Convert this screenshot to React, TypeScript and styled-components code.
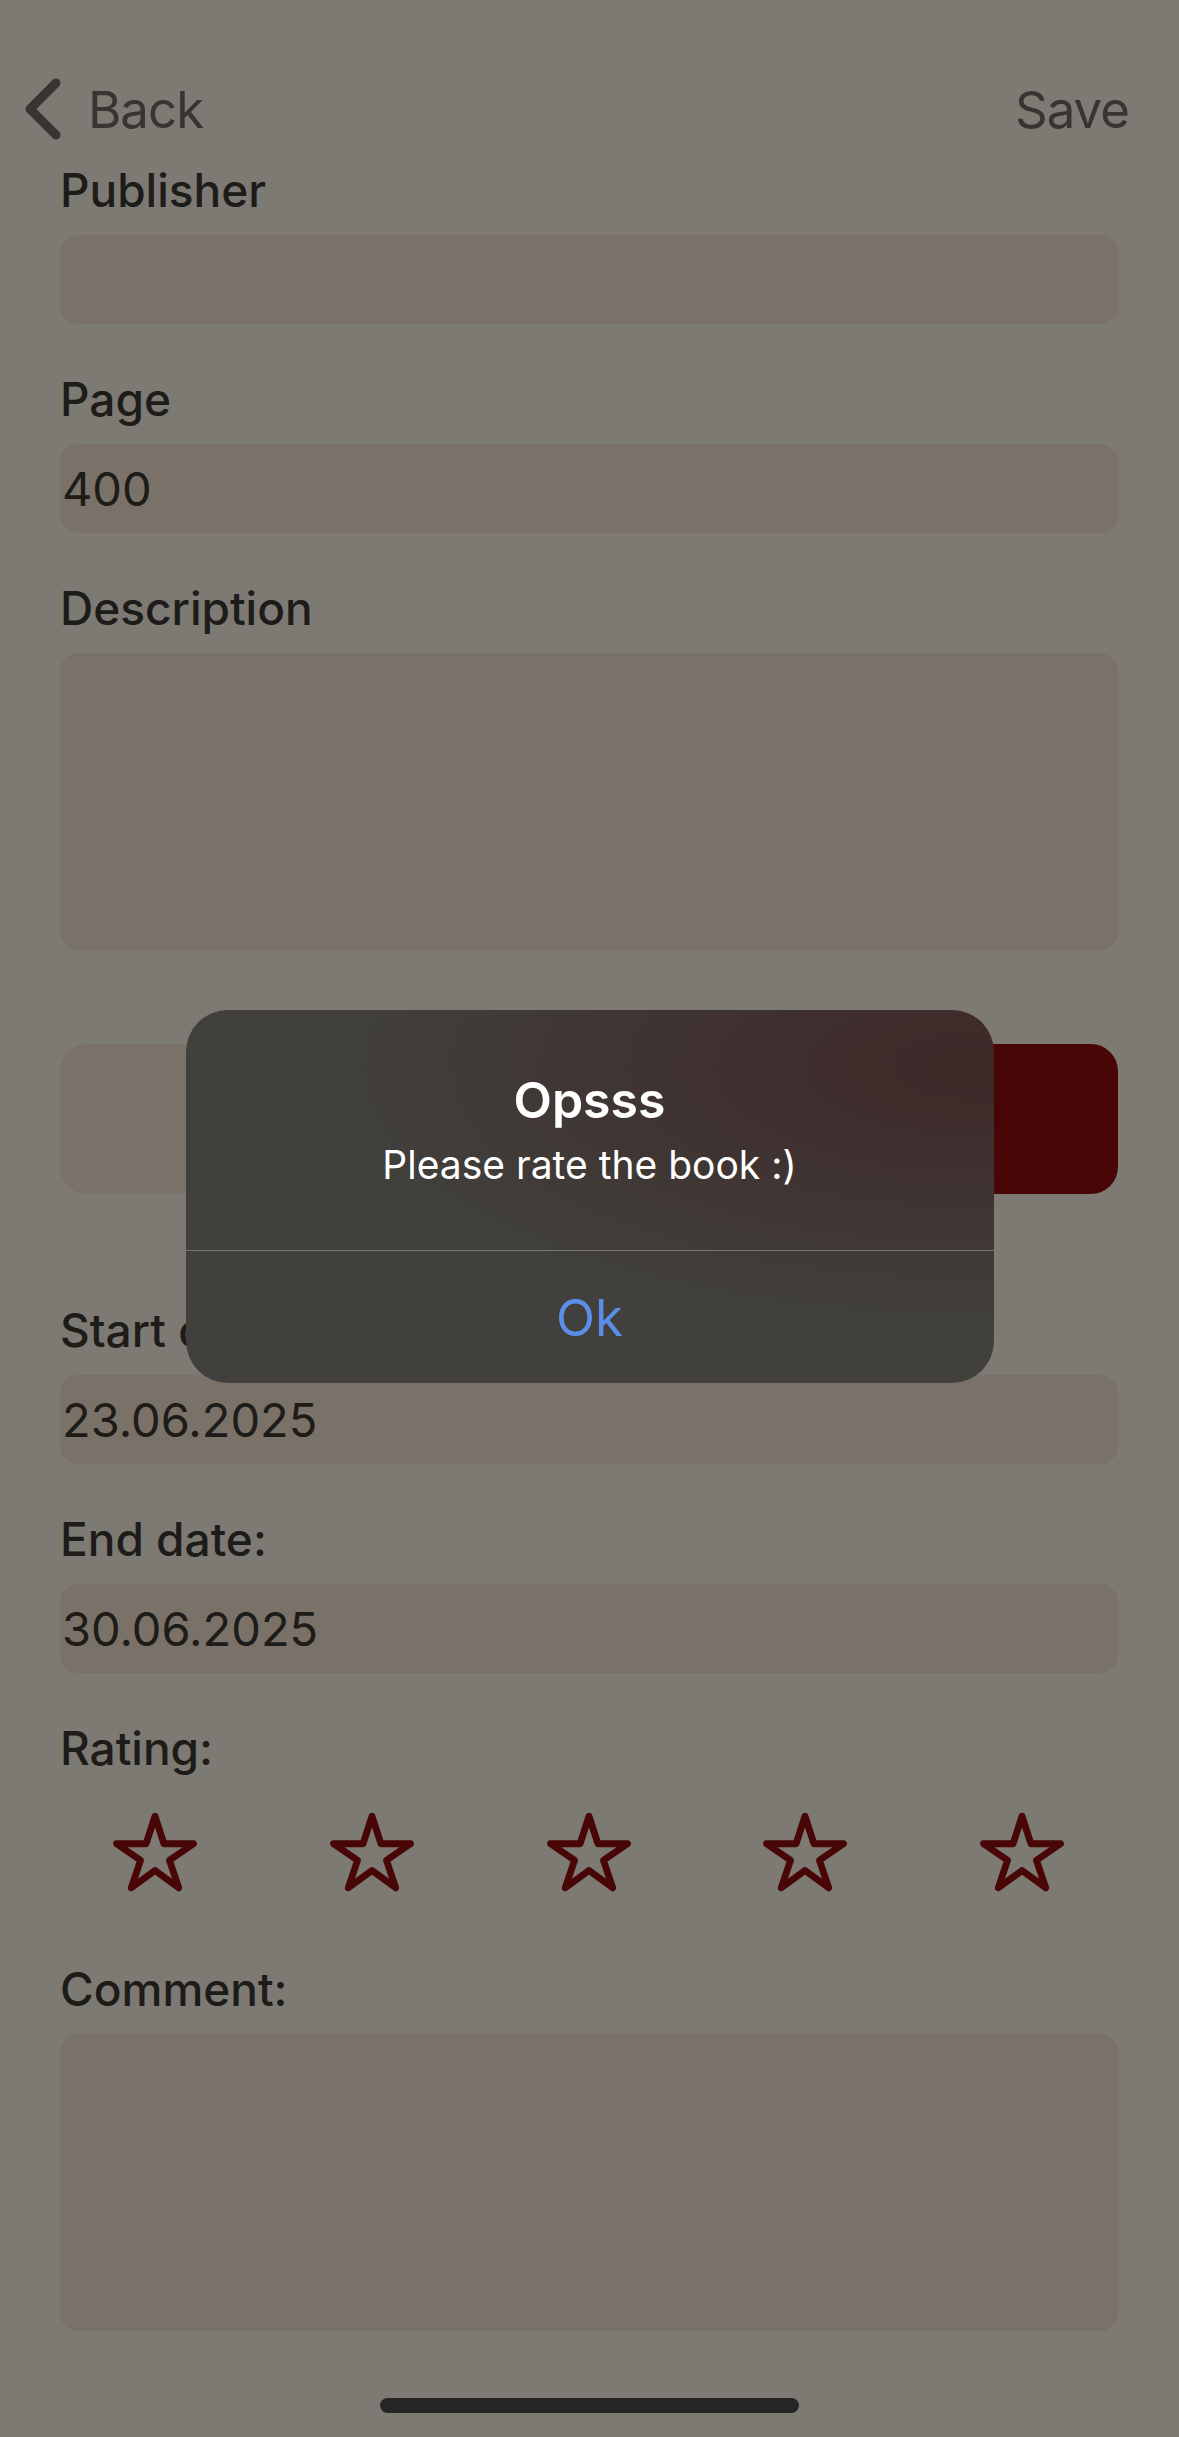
import React from 'react';
import styled, { createGlobalStyle } from 'styled-components';

const GlobalStyle = createGlobalStyle`
  html, body {
    margin: 0;
    padding: 0;
    background: #7d7973;
  }
  * {
    box-sizing: border-box;
  }
  body {
    font-family: 'Inter', 'Liberation Sans', sans-serif;
  }
`;

const Screen = styled.div`
  position: relative;
  width: 1179px;
  height: 2437px;
  overflow: hidden;
  background: #d0cac0;
`;

const NavBar = styled.header`
  display: flex;
  align-items: center;
  justify-content: space-between;
  height: 62px;
  margin-top: 78px;
  padding: 0 50px 0 22px;
`;

const NavButton = styled.button`
  display: flex;
  align-items: center;
  gap: 24px;
  border: none;
  background: none;
  padding: 0;
  font-family: inherit;
  font-size: 51px;
  letter-spacing: -1px;
  font-weight: 400;
  color: #5d5853;
  cursor: pointer;
`;

const Form = styled.main`
  display: flex;
  flex-direction: column;
  padding: 23px 61px 0 60px;
`;

const Field = styled.div<{ $gap?: number }>`
  display: flex;
  flex-direction: column;
  margin-bottom: ${(p) => p.$gap ?? 48}px;
`;

const Label = styled.label`
  font-size: 46px;
  line-height: 54px;
  font-weight: 500;
  color: #322f2b;
  margin-bottom: 18px;
`;

const Input = styled.div<{ $tall?: boolean }>`
  display: flex;
  align-items: ${(p) => (p.$tall ? 'flex-start' : 'center')};
  height: ${(p) => (p.$tall ? 297 : 89)}px;
  border-radius: 18px;
  background: #cbbeaf;
  padding-left: 2px;
  font-size: 47px;
  color: #322f2b;
`;

const ButtonRow = styled.div`
  display: flex;
  gap: 20px;
  margin: 94px 0 109px;
`;

const ActionButton = styled.button<{ $primary?: boolean }>`
  flex: 1;
  height: 150px;
  border: none;
  border-radius: 27px;
  background: ${(p) => (p.$primary ? '#7b0a0a' : '#cbbeaf')};
`;

const StarRow = styled.div`
  display: flex;
  justify-content: space-between;
  padding: 0 52px 0 51px;
  margin: 15px 0 66px;
`;

const StarButton = styled.button`
  display: flex;
  width: 88px;
  height: 88px;
  padding: 0;
  border: none;
  background: none;
  cursor: pointer;
`;

const Backdrop = styled.div`
  position: absolute;
  inset: 0;
  background: rgba(0, 0, 0, 0.4);
  display: flex;
  justify-content: center;
  align-items: flex-start;
  padding-top: 1010px;
`;

const Alert = styled.div`
  width: 808px;
  border-radius: 42px;
  overflow: hidden;
  background:
    radial-gradient(ellipse 80% 70% at 98% 15%, rgba(61, 38, 38, 0.95) 0%, rgba(64, 62, 58, 0) 100%),
    #41403c;
  display: flex;
  flex-direction: column;
  text-align: center;
`;

const AlertBody = styled.div`
  display: flex;
  flex-direction: column;
  align-items: center;
  gap: 10px;
  padding: 59px 40px 61px;
  border-bottom: 1px solid #77736f;
`;

const AlertTitle = styled.h2`
  margin: 0;
  font-size: 50px;
  line-height: 62px;
  font-weight: 600;
  color: #ffffff;
`;

const AlertMessage = styled.p`
  margin: 0;
  font-size: 39px;
  line-height: 48px;
  color: #ffffff;
`;

const AlertAction = styled.button`
  height: 132px;
  border: none;
  background: none;
  font-family: inherit;
  font-size: 51px;
  color: #5b8ee6;
  cursor: pointer;
`;

const HomeIndicator = styled.div`
  position: absolute;
  left: 380px;
  bottom: 24px;
  width: 419px;
  height: 15px;
  border-radius: 8px;
  background: #252525;
`;

const BackChevron = () => (
  <svg width="42" height="62" viewBox="0 0 42 62" fill="none">
    <path d="M34 5 L8 31 L34 57" stroke="#5d5853" strokeWidth="9" strokeLinecap="round" strokeLinejoin="round" />
  </svg>
);

const StarOutline = () => (
  <svg width="88" height="88" viewBox="0 0 512 512" fill="none">
    <path
      d="M480 208H308L256 48l-52 160H32l140 96-54 160 138-100 138 100-54-160z"
      stroke="#7b0a0a"
      strokeWidth="40"
      strokeLinejoin="round"
    />
  </svg>
);

const fields = [
  { label: 'Publisher', value: '' },
  { label: 'Page', value: '400' },
];

export default function App() {
  return (
    <Screen>
      <GlobalStyle />
      <NavBar>
        <NavButton>
          <BackChevron />
          Back
        </NavButton>
        <NavButton>Save</NavButton>
      </NavBar>

      <Form>
        {fields.map((f) => (
          <Field key={f.label}>
            <Label>{f.label}</Label>
            <Input>{f.value}</Input>
          </Field>
        ))}
        <Field $gap={0}>
          <Label>Description</Label>
          <Input $tall />
        </Field>

        <ButtonRow>
          <ActionButton aria-label="Pick image" />
          <ActionButton $primary aria-label="Finish" />
        </ButtonRow>

        <Field>
          <Label>Start date:</Label>
          <Input>23.06.2025</Input>
        </Field>
        <Field>
          <Label>End date:</Label>
          <Input>30.06.2025</Input>
        </Field>
        <Field $gap={0}>
          <Label>Rating:</Label>
        </Field>
        <StarRow>
          {[1, 2, 3, 4, 5].map((n) => (
            <StarButton key={n} aria-label={`${n} stars`}>
              <StarOutline />
            </StarButton>
          ))}
        </StarRow>
        <Field $gap={0}>
          <Label>Comment:</Label>
          <Input $tall />
        </Field>
      </Form>

      <Backdrop>
        <Alert>
          <AlertBody>
            <AlertTitle>Opsss</AlertTitle>
            <AlertMessage>Please rate the book :)</AlertMessage>
          </AlertBody>
          <AlertAction>Ok</AlertAction>
        </Alert>
      </Backdrop>
      <HomeIndicator />
    </Screen>
  );
}
